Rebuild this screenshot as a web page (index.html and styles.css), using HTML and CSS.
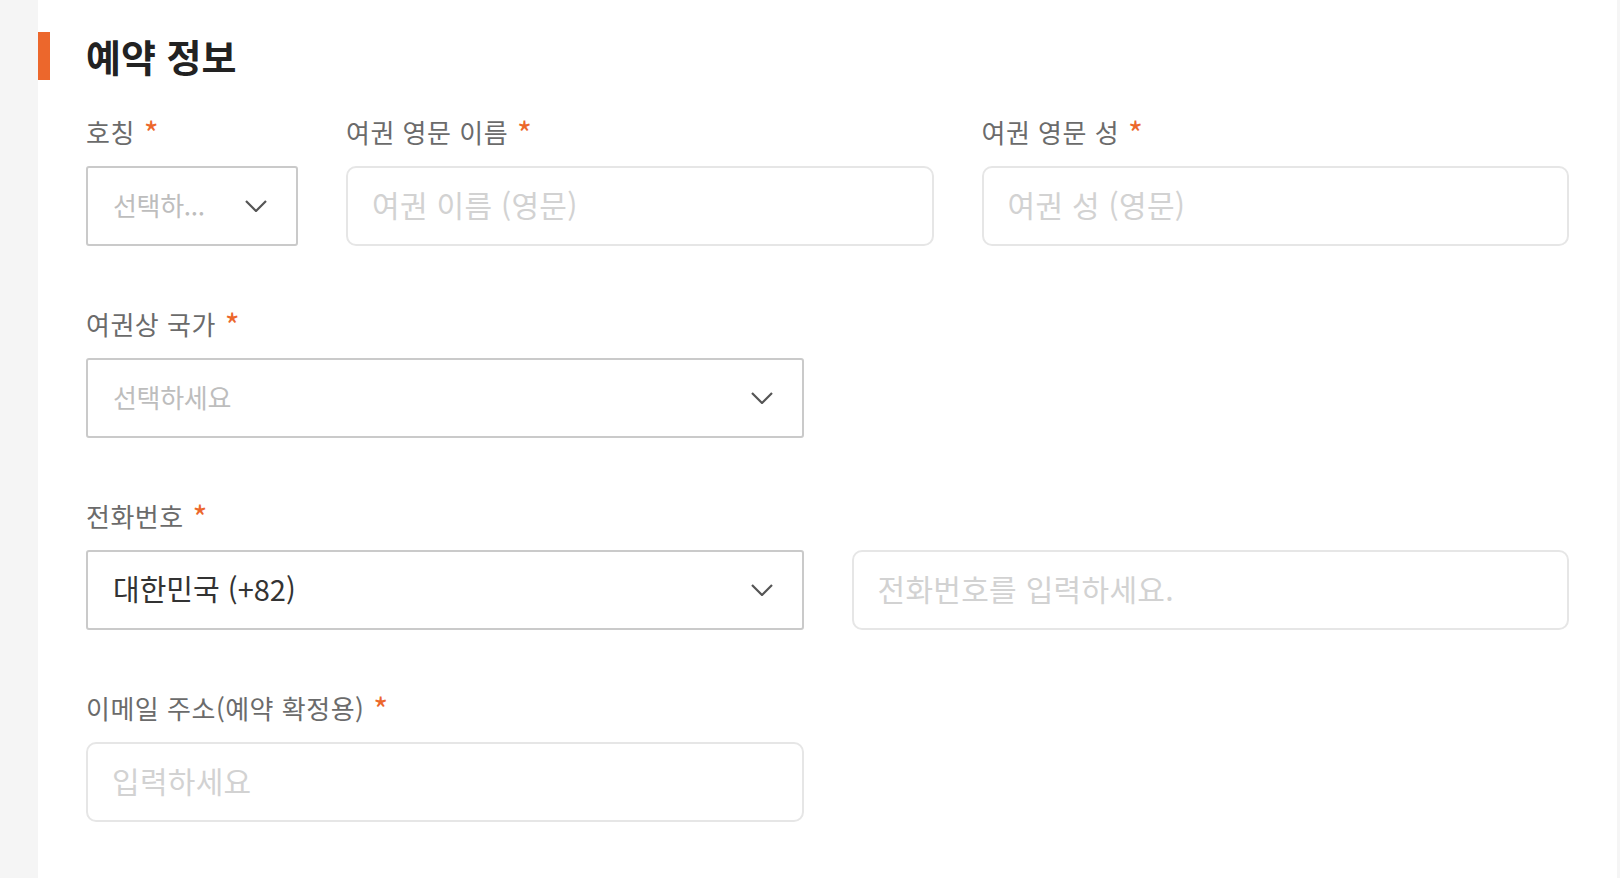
FILE: index.html
```html
<!DOCTYPE html>
<html lang="ko">
<head>
<meta charset="utf-8">
<title>예약 정보</title>
<link rel="stylesheet" href="styles.css">
</head>
<body>
<div class="side-left"></div>
<main class="page">
  <h2 class="title">예약 정보</h2>
  <div class="form">
    <div class="row row-3">
      <div class="field">
        <div class="label">호칭 <span class="req">*</span></div>
        <div class="select"><span class="ph">선택하...</span><svg class="chev" viewBox="0 0 22 12" width="22" height="12"><polyline points="1,1 11,11 21,1"/></svg></div>
      </div>
      <div class="field">
        <div class="label">여권 영문 이름 <span class="req">*</span></div>
        <div class="input"><span class="ph-in">여권 이름 (영문)</span></div>
      </div>
      <div class="field">
        <div class="label">여권 영문 성 <span class="req">*</span></div>
        <div class="input"><span class="ph-in">여권 성 (영문)</span></div>
      </div>
    </div>
    <div class="row row-2">
      <div class="field">
        <div class="label">여권상 국가 <span class="req">*</span></div>
        <div class="select"><span class="ph">선택하세요</span><svg class="chev" viewBox="0 0 22 12" width="22" height="12"><polyline points="1,1 11,11 21,1"/></svg></div>
      </div>
    </div>
    <div class="field">
      <div class="label">전화번호 <span class="req">*</span></div>
      <div class="row row-2">
        <div class="select"><span class="val">대한민국 (+82)</span><svg class="chev" viewBox="0 0 22 12" width="22" height="12"><polyline points="1,1 11,11 21,1"/></svg></div>
        <div class="input"><span class="ph-in">전화번호를 입력하세요.</span></div>
      </div>
    </div>
    <div class="row row-2">
      <div class="field">
        <div class="label">이메일 주소(예약 확정용) <span class="req">*</span></div>
        <div class="input"><span class="ph-in">입력하세요</span></div>
      </div>
    </div>
  </div>
</main>
<div class="side-right"></div>
</body>
</html>
```
FILE: styles.css
```css
* { box-sizing: border-box; }
html, body { margin: 0; padding: 0; height: 100%; }
body {
  display: flex;
  background: #ffffff;
  font-family: "Noto Sans CJK KR", "Noto Sans", sans-serif;
  overflow: hidden;
}
.side-left { width: 38px; flex: none; background: #f5f5f5; }
.side-right { width: 3px; flex: none; background: #f5f5f5; }
.page { flex: 1; padding-top: 32px; min-width: 0; }
.title {
  margin: 0;
  height: 48px;
  line-height: 48px;
  border-left: 12px solid #ec672c;
  padding-left: 36px;
  font-size: 38px;
  font-weight: 700;
  color: #222222;
}
.form {
  padding: 34px 48px 0 48px;
  display: flex;
  flex-direction: column;
  gap: 60px;
}
.row { display: grid; column-gap: 48px; }
.row-3 { grid-template-columns: 212px 1fr 1fr; }
.row-2 { grid-template-columns: 1fr 1fr; }
.field { display: flex; flex-direction: column; min-width: 0; }
.label {
  height: 36px;
  line-height: 36px;
  margin-bottom: 16px;
  font-size: 26px;
  letter-spacing: 0.5px;
  color: #6b6b6b;
  white-space: nowrap;
}
.req {
  color: #ec672c;
  font-size: 32px;
  margin-left: 1px;
  display: inline-block;
  vertical-align: top;
  line-height: 36px;
}
.select {
  height: 80px;
  border: 2px solid #cacaca;
  border-radius: 3px;
  display: flex;
  align-items: center;
  justify-content: space-between;
  padding: 0 29px 0 25px;
  font-size: 26px;
}
.ph { color: #bdbdbd; white-space: nowrap; margin-bottom: 4px; letter-spacing: -0.3px; }
.val { color: #333333; font-size: 29px; margin-bottom: 4px; }
.chev { flex: none; fill: none; stroke: #555555; stroke-width: 2.2; }
.input {
  height: 80px;
  border: 2px solid #e6e6e6;
  border-radius: 10px;
  display: flex;
  align-items: center;
  padding: 0 24px;
  font-size: 30px;
  letter-spacing: 0.3px;
}
.ph-in { color: #d2d2d2; white-space: nowrap; margin-bottom: 4px; }
```
